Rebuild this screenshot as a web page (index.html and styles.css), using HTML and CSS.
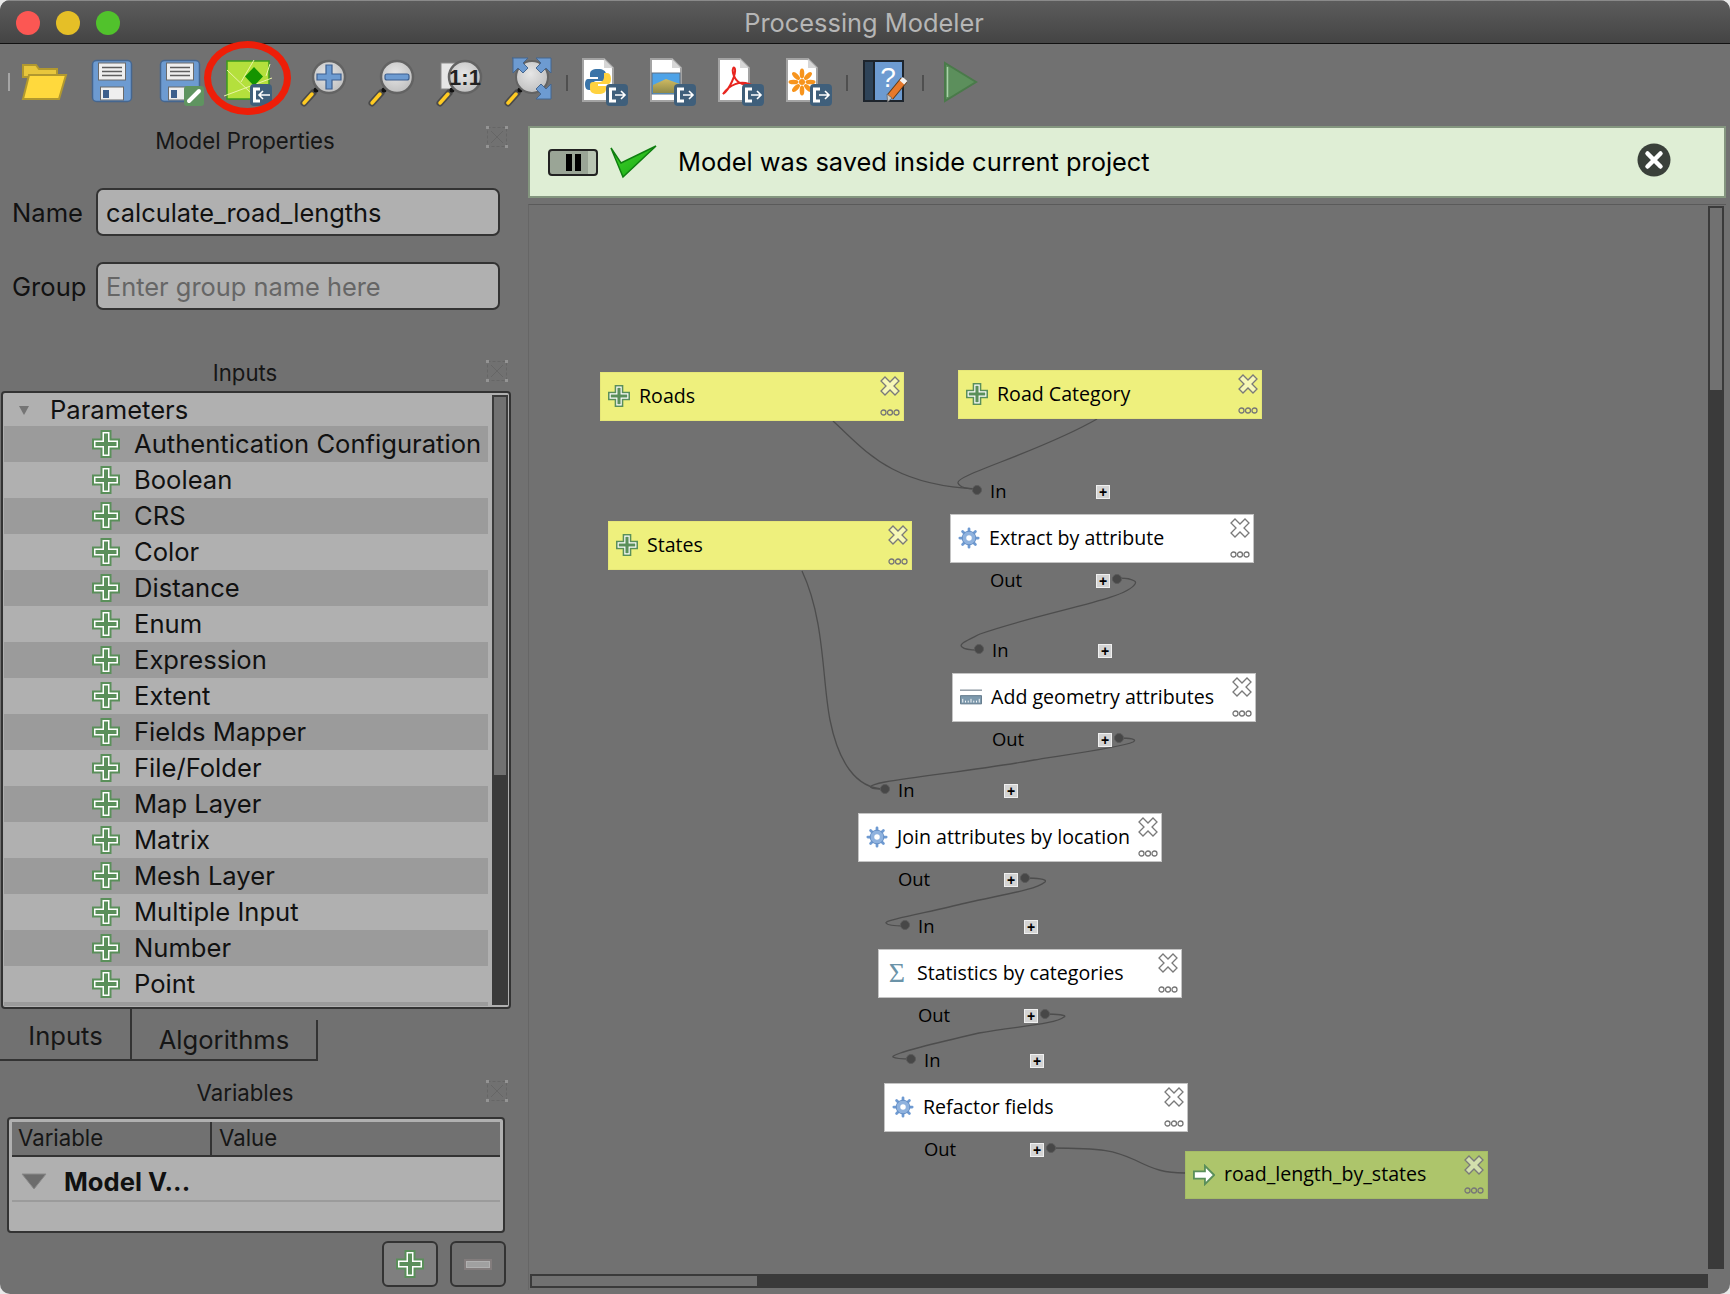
FILE: index.html
```html
<!DOCTYPE html>
<html lang="en">
<head>
  <meta charset="UTF-8">
  <title>Processing Modeler</title>
  <link rel="stylesheet" href="styles.css">
</head>
<body>

  <!-- Shared icons -->
  <svg class="sprite" xmlns="http://www.w3.org/2000/svg">
    <defs>
      <radialGradient id="lens" cx="45%" cy="40%" r="65%">
        <stop offset="0" stop-color="#e6e6e6"/>
        <stop offset="1" stop-color="#bdbdbd"/>
      </radialGradient>
      <linearGradient id="hill" x1="0" y1="0" x2="0" y2="1">
        <stop offset="0" stop-color="#d0bb62"/>
        <stop offset="1" stop-color="#8f8a4a"/>
      </linearGradient>
      <linearGradient id="tick" x1="0" y1="0" x2="1" y2="1">
        <stop offset="0" stop-color="#46d62c"/>
        <stop offset="1" stop-color="#12a512"/>
      </linearGradient>
    </defs>

    <symbol id="i-plus" viewBox="0 0 28 28">
      <path fill="#5a8f5a" d="M8.5 0h11v8.500h8.500v11h-8.500v8.500h-11v-8.500h-8.500v-11h8.500z"/>
      <path fill="#fff" d="M10.500 2h7v8.500h8.500v7h-8.500v8.500h-7v-8.500h-8.500v-7h8.500z"/>
      <path fill="#5a8f5a" d="M12 3.500h4v8.500h8.500v4h-8.500v8.500h-4v-8.500h-8.500v-4h8.500z"/>
    </symbol>

    <symbol id="i-gear" viewBox="0 0 24 24">
      <g stroke="#6e9ad2" stroke-width="3" stroke-linecap="round">
        <path d="M12 2v20M2 12h20M5 5l14 14M19 5L5 19"/>
      </g>
      <circle cx="12" cy="12" r="7.500" fill="#8fb2de" stroke="#5f8ac2"/>
      <circle cx="12" cy="12" r="3" fill="#fff"/>
    </symbol>

    <symbol id="i-geom" viewBox="0 0 24 16">
      <path fill="#fff" d="M0 0h24v6H0z"/>
      <path fill="#4e5f6e" d="M0 0h24v1H0z"/>
      <path fill="#7d99ad" stroke="#5d7587" d="M.5 6.500h23v9H.5z"/>
      <path stroke="#fff" d="M3 14v-4M6 14v-2M9 14v-2M12 14v-4M15 14v-2M18 14v-2M21 14v-4"/>
    </symbol>

    <symbol id="i-out" viewBox="0 0 24 24">
      <path fill="#fff" stroke="#5a8f5a" stroke-width="2" d="M1 8h12V2l10 10-10 10v-6H1z"/>
    </symbol>

    <symbol id="i-close" viewBox="0 0 20 20">
      <path fill="#fff" fill-opacity=".45" stroke="#7a7a7a" stroke-width="1.300" d="M5 1l5 5 5-5 4 4-5 5 5 5-4 4-5-5-5 5-4-4 5-5-5-5z"/>
    </symbol>

    <symbol id="i-more" viewBox="0 0 20 7">
      <g fill="none" stroke="#777" stroke-width="1.300">
        <circle cx="3.500" cy="3.500" r="2.500"/>
        <circle cx="10" cy="3.500" r="2.500"/>
        <circle cx="16.500" cy="3.500" r="2.500"/>
      </g>
    </symbol>

    <symbol id="i-dock" viewBox="0 0 22 22">
      <g fill="none" stroke="#666">
        <path d="M1.500 1.500h19v19h-19z" stroke-dasharray="3 2"/>
        <path d="M5 5l12 12M17 5L5 17"/>
      </g>
      <g fill="#949494">
        <rect x="0" y="0" width="3" height="3"/><rect x="19" y="0" width="3" height="3"/>
        <rect x="0" y="19" width="3" height="3"/><rect x="19" y="19" width="3" height="3"/>
      </g>
    </symbol>

    <symbol id="i-floppy" viewBox="0 0 64 64">
      <rect x="12.500" y="10.500" width="39" height="41" rx="4" fill="#6d9bd1" stroke="#45668f" stroke-width="1.500"/>
      <rect x="18.500" y="13" width="27" height="17" fill="#efefef" stroke="#6a6a6a"/>
      <path stroke="#5e5e5e" stroke-width="1.600" d="M22 17.500h20M22 21.500h20M22 25.500h20"/>
      <rect x="20.500" y="37" width="23" height="13" fill="#efefef" stroke="#6a6a6a"/>
      <rect x="23" y="40" width="6" height="8" fill="#3d5f8c"/>
    </symbol>

    <symbol id="i-export" viewBox="0 0 22 22">
      <rect width="22" height="22" rx="4" fill="#3f5f7b"/>
      <path fill="none" stroke="#fff" stroke-width="3" d="M10 5H4.500v12H10"/>
      <path fill="none" stroke="#fff" stroke-width="1.600" d="M9 11h10M15 7l4 4-4 4"/>
    </symbol>

    <symbol id="i-import" viewBox="0 0 22 22">
      <rect width="22" height="22" rx="4" fill="#3f5f7b"/>
      <path fill="none" stroke="#fff" stroke-width="3" d="M10 5H4.500v12H10"/>
      <path fill="none" stroke="#fff" stroke-width="1.600" d="M20 11H9M13 7l-4 4 4 4"/>
    </symbol>

    <symbol id="i-doc" viewBox="0 0 64 64">
      <path fill="#fff" stroke="#a3a3a3" stroke-width="2" d="M11 9h21l9 9v33H11z"/>
      <path fill="#d6d6d6" d="M32 9l9 9h-9z"/>
    </symbol>

    <symbol id="i-handle" viewBox="0 0 64 64">
      <path stroke="#4a4a4a" stroke-width="7" stroke-linecap="round" d="M29 43L20 53"/>
      <path stroke="#ffcb22" stroke-width="3.500" stroke-linecap="round" d="M28 44L20 53"/>
      <circle cx="32" cy="40" r="2.500" fill="#111"/>
    </symbol>
  </svg>

  <div class="app">

    <header class="titlebar">
      <div class="lights">
        <span class="light light-red"></span>
        <span class="light light-yellow"></span>
        <span class="light light-green"></span>
      </div>
      <h1 class="window-title">Processing Modeler</h1>
    </header>

    <div class="toolbar">
      <span class="sep sep-first"></span>

      <!-- open -->
      <svg class="tool" viewBox="0 0 64 64">
        <path fill="#e8c63c" stroke="#b1982f" stroke-width="2" d="M11 15h13l3 4h18v8H11z"/>
        <path fill="#ffd93d" stroke="#b1982f" stroke-width="2" d="M17 25h37l-7 24H11z"/>
      </svg>
      <!-- save -->
      <svg class="tool" viewBox="0 0 64 64"><use href="#i-floppy"/></svg>
      <!-- save as -->
      <svg class="tool" viewBox="0 0 64 64">
        <use href="#i-floppy"/>
        <rect x="36" y="36" width="20" height="20" rx="3" fill="#5f9460"/>
        <path stroke="#fff" stroke-width="4" stroke-linecap="round" d="M41 51l10-10"/>
      </svg>
      <!-- save in project -->
      <svg class="tool" viewBox="0 0 64 64">
        <rect x="11" y="11" width="42" height="38" fill="#b4e03c" stroke="#3b9a1d" stroke-width="1.500"/>
        <path fill="none" stroke="#eaf3a8" stroke-width="1" d="M11 20l25 24M8 46l48-18M38 10l-13 22M54 14l-4 12"/>
        <path fill="#149400" d="M38 17l9 9.500-9 9.500-9-9.500z"/>
        <use href="#i-import" x="34" y="34" width="22" height="22"/>
      </svg>
      <!-- zoom in -->
      <svg class="tool" viewBox="0 0 64 64">
        <use href="#i-handle"/>
        <circle cx="45" cy="27" r="16" fill="url(#lens)" stroke="#636363" stroke-width="2.500"/>
        <path fill="#6d9bd1" stroke="#3c5f8f" stroke-width="1.200" d="M42 15h6v9h9v6h-9v9h-6v-9h-9v-6h9z"/>
      </svg>
      <!-- zoom out -->
      <svg class="tool" viewBox="0 0 64 64">
        <use href="#i-handle"/>
        <circle cx="45" cy="27" r="16" fill="url(#lens)" stroke="#636363" stroke-width="2.500"/>
        <rect x="33" y="24" width="24" height="6" rx="2" fill="#6d9bd1" stroke="#3c5f8f" stroke-width="1.200"/>
      </svg>
      <!-- zoom actual -->
      <svg class="tool" viewBox="0 0 64 64">
        <rect x="21" y="13" width="24" height="26" fill="#e6e6e6" stroke="#8a8a8a"/>
        <use href="#i-handle"/>
        <circle cx="45" cy="27" r="16" fill="url(#lens)" stroke="#636363" stroke-width="2.500"/>
        <text class="ratio-text" x="45" y="35" text-anchor="middle">1:1</text>
      </svg>
      <!-- zoom full -->
      <svg class="tool" viewBox="0 0 64 64">
        <use href="#i-handle"/>
        <circle cx="44" cy="27" r="16" fill="url(#lens)" stroke="#636363" stroke-width="2"/>
        <g fill="#6d9bd1" stroke="#45668f">
          <path d="M24 8h16l-5 5 5 5-5 5-5-5-5 5v-15z"/>
          <path d="M63 8H48l5 5-5 5 5 5 5-5 5 5z"/>
          <path d="M63 49H48l5-5-5-5 5-5 5 5 5-5z"/>
        </g>
      </svg>

      <span class="sep sep-wide"></span>

      <!-- export as script -->
      <svg class="tool" viewBox="0 0 64 64">
        <use href="#i-doc"/>
        <path fill="#3a74a8" d="M26 19c-6 0-8 2-8 5v3h8v2H16c-2 0-3 2-3 5s1 6 4 6h3v-4c0-3 2-5 5-5h6c2 0 3-1 3-3v-4c0-3-3-5-8-5z"/>
        <path fill="#ffd23f" d="M26 44c6 0 8-2 8-5v-3h-8v-2h10c2 0 3-2 3-5s-1-6-4-6h-3v4c0 3-2 5-5 5h-6c-2 0-3 1-3 3v4c0 3 3 5 8 5z"/>
        <use href="#i-export" x="34" y="34" width="22" height="22"/>
      </svg>
      <!-- export as image -->
      <svg class="tool" viewBox="0 0 64 64">
        <use href="#i-doc"/>
        <rect x="12" y="23" width="28" height="21" fill="#4ea3e8" stroke="#5c6f82"/>
        <path fill="url(#hill)" d="M13 35l13-6 14 5v9H13z"/>
        <use href="#i-export" x="34" y="34" width="22" height="22"/>
      </svg>
      <!-- export as pdf -->
      <svg class="tool" viewBox="0 0 64 64">
        <use href="#i-doc"/>
        <path fill="none" stroke="#e8251f" stroke-width="2" d="M15 44c7-5 13-20 12-25-1-3-3-1-2 4 2 8 8 13 16 11-9-3-19 0-26 10z"/>
        <use href="#i-export" x="34" y="34" width="22" height="22"/>
      </svg>
      <!-- export as svg -->
      <svg class="tool" viewBox="0 0 64 64">
        <use href="#i-doc"/>
        <g fill="#f7941d">
          <circle cx="26" cy="32" r="3"/>
          <ellipse cx="26" cy="23.500" rx="2.300" ry="5"/>
          <ellipse cx="26" cy="40.500" rx="2.300" ry="5"/>
          <ellipse cx="17.500" cy="32" rx="5" ry="2.300"/>
          <ellipse cx="34.500" cy="32" rx="5" ry="2.300"/>
          <ellipse cx="20" cy="26" rx="2.300" ry="5" transform="rotate(-45 20 26)"/>
          <ellipse cx="32" cy="26" rx="2.300" ry="5" transform="rotate(45 32 26)"/>
          <ellipse cx="20" cy="38" rx="2.300" ry="5" transform="rotate(45 20 38)"/>
          <ellipse cx="32" cy="38" rx="2.300" ry="5" transform="rotate(-45 32 38)"/>
        </g>
        <use href="#i-export" x="34" y="34" width="22" height="22"/>
      </svg>

      <span class="sep"></span>

      <!-- edit help -->
      <svg class="tool" viewBox="0 0 64 64">
        <rect x="11" y="10" width="41" height="42" fill="#1d242c"/>
        <rect x="13" y="12" width="8" height="38" fill="#2e4358"/>
        <rect x="23" y="12" width="27" height="38" fill="#6d9bd1"/>
        <text class="help-text" x="36" y="37" text-anchor="middle">?</text>
        <path stroke="#5a3a1a" stroke-width="8" d="M38 47l14-17"/>
        <path stroke="#e8792b" stroke-width="6" d="M38 47l14-17"/>
        <path stroke="#f2f2f2" stroke-width="6" d="M50 32.500l3-3.500"/>
        <path fill="#c9c9c9" stroke="#666" stroke-width=".8" d="M35 44l5 4-4.500 4z"/>
      </svg>

      <span class="sep"></span>

      <!-- run -->
      <svg class="tool" viewBox="0 0 64 64">
        <path fill="#5c8f5c" stroke="#4a7a4a" stroke-width="2" d="M17 13l31 19-31 19z"/>
        <path stroke="#a9d2a9" stroke-width="1.500" d="M19.500 17v30"/>
      </svg>

      <span class="highlight-ring"></span>
    </div>

    <div class="main">

      <aside class="side">
        <div class="dock-title">
          Model Properties
          <svg class="dock-icon"><use href="#i-dock"/></svg>
        </div>

        <div class="props">
          <label class="prop-label" for="modelName">Name</label>
          <input class="prop-input" id="modelName" value="calculate_road_lengths">
          <label class="prop-label" for="modelGroup">Group</label>
          <input class="prop-input" id="modelGroup" placeholder="Enter group name here">
        </div>

        <div class="dock-title dock-inputs">
          Inputs
          <svg class="dock-icon"><use href="#i-dock"/></svg>
        </div>

        <div class="tree">
          <div class="tree-list">
            <div class="tree-head"><span class="twisty"></span>Parameters</div>
            <div class="tree-row"><svg class="plus-icon"><use href="#i-plus"/></svg>Authentication Configuration</div>
            <div class="tree-row"><svg class="plus-icon"><use href="#i-plus"/></svg>Boolean</div>
            <div class="tree-row"><svg class="plus-icon"><use href="#i-plus"/></svg>CRS</div>
            <div class="tree-row"><svg class="plus-icon"><use href="#i-plus"/></svg>Color</div>
            <div class="tree-row"><svg class="plus-icon"><use href="#i-plus"/></svg>Distance</div>
            <div class="tree-row"><svg class="plus-icon"><use href="#i-plus"/></svg>Enum</div>
            <div class="tree-row"><svg class="plus-icon"><use href="#i-plus"/></svg>Expression</div>
            <div class="tree-row"><svg class="plus-icon"><use href="#i-plus"/></svg>Extent</div>
            <div class="tree-row"><svg class="plus-icon"><use href="#i-plus"/></svg>Fields Mapper</div>
            <div class="tree-row"><svg class="plus-icon"><use href="#i-plus"/></svg>File/Folder</div>
            <div class="tree-row"><svg class="plus-icon"><use href="#i-plus"/></svg>Map Layer</div>
            <div class="tree-row"><svg class="plus-icon"><use href="#i-plus"/></svg>Matrix</div>
            <div class="tree-row"><svg class="plus-icon"><use href="#i-plus"/></svg>Mesh Layer</div>
            <div class="tree-row"><svg class="plus-icon"><use href="#i-plus"/></svg>Multiple Input</div>
            <div class="tree-row"><svg class="plus-icon"><use href="#i-plus"/></svg>Number</div>
            <div class="tree-row"><svg class="plus-icon"><use href="#i-plus"/></svg>Point</div>
            <div class="tree-row tree-row-cut"></div>
          </div>
          <div class="tree-scroll"></div>
        </div>

        <div class="tabs">
          <div class="tab tab-active">Inputs</div>
          <div class="tab">Algorithms</div>
        </div>

        <div class="dock-title dock-vars">
          Variables
          <svg class="dock-icon"><use href="#i-dock"/></svg>
        </div>

        <div class="vars">
          <div class="vars-head">
            <div class="vars-col vars-col-name">Variable</div>
            <div class="vars-col">Value</div>
          </div>
          <div class="vars-group">
            <svg class="vars-twisty" viewBox="0 0 26 17"><path fill="#6c6c6c" stroke="#8a8a8a" d="M1 1h24L13 16z"/></svg>
            Model V...
          </div>
        </div>

        <div class="vars-actions">
          <button class="icon-btn"><svg class="plus-icon"><use href="#i-plus"/></svg></button>
          <button class="icon-btn"><span class="minus-off"></span></button>
        </div>
      </aside>

      <section class="work">
        <div class="message">
          <span class="pause-btn"><i></i><i></i></span>
          <svg class="check-icon" viewBox="0 0 48 34">
            <path fill="url(#tick)" stroke="#0f7f10" stroke-width="1.500" d="M1 3l10 15L46 1 13 32z"/>
          </svg>
          <span class="message-text">Model was saved inside current project</span>
          <svg class="message-close" viewBox="0 0 34 34">
            <circle cx="17" cy="17" r="16.500" fill="#3a403a"/>
            <path stroke="#fff" stroke-width="4.500" stroke-linecap="round" d="M10.500 10.500l13 13M23.500 10.500l-13 13"/>
          </svg>
        </div>

        <div class="view">
          <div class="canvas">
            <!-- wires use page coordinates -->
            <svg class="wires" viewBox="529 205 1179 1069">
              <g fill="none" stroke="#4d4d4d" stroke-width="1.300">
                <path d="M833 421C865 450 890 485 977 489"/>
                <path d="M1097 419C1040 452 955 475 958 483C960 488 970 489 977 489"/>
                <path d="M802 571C825 620 822 680 830 720C838 760 855 789 885 789"/>
                <path d="M1117 578C1128 578 1138 580 1135 584C1125 600 1050 610 980 634C968 640 958 644 962 647C965 650 972 650 978 650"/>
                <path d="M1118 738C1130 738 1138 739 1133 742C1120 748 1050 757 1034 760C990 768 930 775 885 782C880 783 866 786 872 788C876 789 880 789 885 789"/>
                <path d="M1025 878C1036 878 1048 879 1045 882C1036 890 1000 895 966 903C930 912 884 920 886 923C888 926 896 926 904 926"/>
                <path d="M1045 1014C1056 1014 1068 1015 1064 1017C1056 1024 1020 1026 979 1033C940 1042 890 1054 893 1057C896 1059 902 1059 911 1059"/>
                <path d="M1050 1148C1105 1148 1115 1151 1135 1160C1155 1170 1165 1173 1185 1173"/>
              </g>
            </svg>

            <div class="node node-input pos-roads">
              <svg class="node-icon"><use href="#i-plus"/></svg>Roads
              <svg class="node-close"><use href="#i-close"/></svg>
              <svg class="node-more"><use href="#i-more"/></svg>
            </div>
            <div class="node node-input pos-category">
              <svg class="node-icon"><use href="#i-plus"/></svg>Road Category
              <svg class="node-close"><use href="#i-close"/></svg>
              <svg class="node-more"><use href="#i-more"/></svg>
            </div>
            <div class="node node-input pos-states">
              <svg class="node-icon"><use href="#i-plus"/></svg>States
              <svg class="node-close"><use href="#i-close"/></svg>
              <svg class="node-more"><use href="#i-more"/></svg>
            </div>

            <div class="alg pos-extract">
              <div class="port port-in"><span class="dot"></span><span class="port-name">In</span><span class="port-add">+</span></div>
              <div class="node">
                <svg class="node-icon"><use href="#i-gear"/></svg>Extract by attribute
                <svg class="node-close"><use href="#i-close"/></svg>
                <svg class="node-more"><use href="#i-more"/></svg>
              </div>
              <div class="port port-out"><span></span><span class="port-name">Out</span><span class="port-add">+</span><span class="dot"></span></div>
            </div>

            <div class="alg pos-geometry">
              <div class="port port-in"><span class="dot"></span><span class="port-name">In</span><span class="port-add">+</span></div>
              <div class="node">
                <svg class="node-icon"><use href="#i-geom"/></svg>Add geometry attributes
                <svg class="node-close"><use href="#i-close"/></svg>
                <svg class="node-more"><use href="#i-more"/></svg>
              </div>
              <div class="port port-out"><span></span><span class="port-name">Out</span><span class="port-add">+</span><span class="dot"></span></div>
            </div>

            <div class="alg pos-join">
              <div class="port port-in"><span class="dot"></span><span class="port-name">In</span><span class="port-add">+</span></div>
              <div class="node">
                <svg class="node-icon"><use href="#i-gear"/></svg>Join attributes by location
                <svg class="node-close"><use href="#i-close"/></svg>
                <svg class="node-more"><use href="#i-more"/></svg>
              </div>
              <div class="port port-out"><span></span><span class="port-name">Out</span><span class="port-add">+</span><span class="dot"></span></div>
            </div>

            <div class="alg pos-stats">
              <div class="port port-in"><span class="dot"></span><span class="port-name">In</span><span class="port-add">+</span></div>
              <div class="node">
                <span class="node-icon sigma">Σ</span>Statistics by categories
                <svg class="node-close"><use href="#i-close"/></svg>
                <svg class="node-more"><use href="#i-more"/></svg>
              </div>
              <div class="port port-out"><span></span><span class="port-name">Out</span><span class="port-add">+</span><span class="dot"></span></div>
            </div>

            <div class="alg pos-refactor">
              <div class="port port-in"><span class="dot"></span><span class="port-name">In</span><span class="port-add">+</span></div>
              <div class="node">
                <svg class="node-icon"><use href="#i-gear"/></svg>Refactor fields
                <svg class="node-close"><use href="#i-close"/></svg>
                <svg class="node-more"><use href="#i-more"/></svg>
              </div>
              <div class="port port-out"><span></span><span class="port-name">Out</span><span class="port-add">+</span><span class="dot"></span></div>
            </div>

            <div class="node node-output pos-output">
              <svg class="node-icon"><use href="#i-out"/></svg>road_length_by_states
              <svg class="node-close"><use href="#i-close"/></svg>
              <svg class="node-more"><use href="#i-more"/></svg>
            </div>
          </div>

          <div class="vbar"><div class="vbar-thumb"></div></div>
          <div class="hbar"><div class="hbar-thumb"></div></div>
        </div>
      </section>
    </div>
  </div>

</body>
</html>
```

FILE: styles.css
```css
html, body {
  margin: 0;
  padding: 0;
  height: 100%;
  background: #e9e9e9;
  overflow: hidden;
}

body {
  font-family: "Inter", "Liberation Sans", sans-serif;
  color: #111;
}

.sprite {
  position: absolute;
  width: 0;
  height: 0;
}

.app {
  width: 1730px;
  height: 1294px;
  background: #717171;
  border-radius: 10px;
  overflow: hidden;
  display: flex;
  flex-direction: column;
}

/* Title bar */
.titlebar {
  height: 42px;
  flex: none;
  position: relative;
  display: flex;
  justify-content: center;
  align-items: center;
  background: linear-gradient(#5c5c5c, #444);
  border-top: 1px solid #8a8a8a;
  border-bottom: 1px solid #111;
}

.lights {
  position: absolute;
  left: 16px;
  top: 10px;
  display: flex;
  gap: 16px;
}

.light {
  width: 24px;
  height: 24px;
  border-radius: 50%;
}

.light-red { background: #fc5753; }
.light-yellow { background: #e5bf27; }
.light-green { background: #51c22c; }

.window-title {
  margin: 0;
  padding-right: 2px;
  font-size: 25.4px;
  font-weight: 400;
  color: #b6b6b6;
}

/* Toolbar */
.toolbar {
  height: 74px;
  flex: none;
  position: relative;
  display: flex;
  align-items: flex-start;
  gap: 4px;
  padding: 6px 0 0 8px;
  box-sizing: border-box;
}

.tool {
  width: 64px;
  height: 64px;
  flex: none;
}

.sep {
  width: 2px;
  height: 16px;
  margin: 25px 0 0 2px;
  background: #4f4f4f;
  flex: none;
}

.sep-first {
  height: 18px;
  margin: 23px -2px 0 0;
  background: #a5a5a5;
}

.sep-wide {
  margin-left: 10px;
}

.highlight-ring {
  position: absolute;
  left: 204px;
  top: -3px;
  width: 87px;
  height: 74px;
  box-sizing: border-box;
  border: 7px solid #ee1e08;
  border-radius: 50%;
}

.ratio-text {
  font-family: "Liberation Sans", sans-serif;
  font-size: 22px;
  font-weight: 700;
  fill: #222;
}

.help-text {
  font-family: "Liberation Sans", sans-serif;
  font-size: 28px;
  fill: #fff;
}

/* Layout */
.main {
  flex: 1;
  display: flex;
  min-height: 0;
}

.side {
  width: 528px;
  flex: none;
}

.work {
  flex: 1;
  min-width: 0;
  display: flex;
  flex-direction: column;
  padding: 8px 4px 4px 0;
}

/* Dock titles */
.dock-title {
  box-sizing: content-box;
  position: relative;
  width: 490px;
  padding-right: 20px;
  height: 44px;
  display: flex;
  justify-content: center;
  align-items: center;
  font-size: 22.2px;
  color: #161616;
}

.dock-icon {
  position: absolute;
  right: 2px;
  top: 8px;
  width: 22px;
  height: 22px;
}

.dock-inputs {
  height: 36px;
  padding-bottom: 1px;
  margin-top: 44px;
}

.dock-inputs .dock-icon {
  top: 6px;
}

.dock-vars {
  height: 40px;
  margin-top: 11px;
  margin-bottom: 5px;
}

/* Name and group */
.props {
  display: grid;
  grid-template-columns: 84px 404px;
  column-gap: 0;
  row-gap: 26px;
  margin: 26px 0 0 12px;
  align-items: center;
}

.prop-label {
  font-size: 25.6px;
}

.prop-input {
  box-sizing: border-box;
  width: 404px;
  height: 48px;
  padding: 0 8px;
  font-family: inherit;
  font-size: 25.4px;
  color: #111;
  background: #b0b0b0;
  border: 2px solid #333;
  border-radius: 7px;
  outline: none;
}

.prop-input::placeholder {
  color: #666;
  opacity: 1;
}

/* Parameter tree */
.tree {
  box-sizing: border-box;
  width: 510px;
  height: 618px;
  margin-left: 1px;
  display: flex;
  background: #b0b0b0;
  border: 2px solid #333;
  border-radius: 4px;
  overflow: hidden;
}

.tree-list {
  width: 484px;
  margin-left: 1px;
  flex: none;
  font-size: 25.6px;
}

.tree-head {
  height: 33px;
  display: flex;
  align-items: center;
  padding-left: 46px;
  position: relative;
}

.twisty {
  position: absolute;
  left: 15px;
  top: 13px;
  border-left: 5.5px solid transparent;
  border-right: 5.5px solid transparent;
  border-top: 9px solid #757575;
}

.tree-row {
  box-sizing: border-box;
  height: 36px;
  display: flex;
  align-items: center;
  padding: 0 0 2px 88px;
  white-space: nowrap;
}

.tree-row:nth-child(even) {
  background: #9b9b9b;
}

.tree-row .plus-icon {
  margin-top: 2px;
}

.tree-row-cut {
  height: 4px;
  padding: 0;
}

.plus-icon {
  width: 28px;
  height: 28px;
  flex: none;
  margin-right: 14px;
}

.tree-scroll {
  box-sizing: border-box;
  width: 16px;
  height: 610px;
  margin: 2px 0 0 4px;
  flex: none;
  border: 2px solid #3a3a3a;
  border-bottom-width: 230px;
  background: #717171;
}

/* Tabs */
.tabs {
  display: flex;
  align-items: flex-end;
  height: 52px;
}

.tab {
  box-sizing: border-box;
  border-right: 2px solid #333;
  border-bottom: 2px solid #333;
  display: flex;
  justify-content: center;
  align-items: center;
  font-size: 25.6px;
  color: #161616;
  width: 186px;
  height: 41px;
}

.tab-active {
  width: 132px;
  height: 52px;
  padding: 3px 0 0 1px;
}

/* Variables */
.vars {
  box-sizing: border-box;
  width: 498px;
  height: 116px;
  margin-left: 7px;
  padding: 3px;
  background: #b0b0b0;
  border: 2px solid #333;
  border-radius: 4px;
}

.vars-head {
  display: flex;
  height: 35px;
  margin: 0 0 0 0;
  background: #717171;
  border-bottom: 2px solid #333;
  box-sizing: border-box;
  font-size: 22.2px;
  color: #161616;
}

.vars-col {
  display: flex;
  align-items: center;
  padding: 0 0 2px 7px;
}

.vars-col-name {
  width: 192px;
  border-right: 2px solid #333;
  padding-left: 6px;
}

.vars-group {
  box-sizing: border-box;
  height: 45px;
  display: flex;
  align-items: center;
  padding: 5px 0 0 9px;
  font-size: 25.6px;
  font-weight: 700;
  border-bottom: 2px solid #9b9b9b;
}

.vars-twisty {
  width: 26px;
  height: 17px;
  margin-right: 17px;
}

.vars-actions {
  display: flex;
  justify-content: flex-end;
  gap: 12px;
  width: 506px;
  margin-top: 8px;
}

.icon-btn {
  box-sizing: border-box;
  width: 56px;
  height: 46px;
  padding: 0;
  display: flex;
  justify-content: center;
  align-items: center;
  background: #7f7f7f;
  border: 2px solid #333;
  border-radius: 6px;
}

.icon-btn .plus-icon {
  margin: 0;
}

.icon-btn + .icon-btn {
  background: #717171;
}

.minus-off {
  box-sizing: border-box;
  width: 28px;
  height: 11px;
  background: #a0a0a0;
  border: 2px solid #837d7d;
  box-shadow: inset 0 0 0 1px #b0b0b0;
}

/* Message bar */
.message {
  box-sizing: border-box;
  height: 72px;
  flex: none;
  display: flex;
  align-items: center;
  padding-left: 18px;
  background: #dfeed5;
  border: 2px solid #84967f;
  position: relative;
}

.pause-btn {
  box-sizing: border-box;
  width: 50px;
  height: 27px;
  display: flex;
  justify-content: center;
  gap: 3px;
  padding: 3px 0;
  border: 2px solid #222;
  border-radius: 4px;
  background: linear-gradient(90deg, #9aa596 82%, #b9c5b3 82%);
}

.pause-btn i {
  width: 6px;
  background: #000;
}

.check-icon {
  width: 48px;
  height: 34px;
  margin-left: 12px;
  flex: none;
}

.message-text {
  margin-left: 20px;
  margin-bottom: 2px;
  font-size: 25.4px;
  color: #000;
}

.message-close {
  position: absolute;
  left: 1107px;
  top: 15px;
  width: 34px;
  height: 34px;
}

/* Scene view */
.view {
  flex: 1;
  min-height: 0;
  margin-top: 6px;
  display: grid;
  grid-template-columns: 1179px 17px;
  grid-template-rows: 1069px 16px;
  border-top: 1px solid #5a5a5a;
  border-left: 1px solid #666;
}

.canvas {
  position: relative;
  overflow: hidden;
}

.wires {
  position: absolute;
  left: 0;
  top: 0;
  width: 1179px;
  height: 1069px;
}

.vbar {
  box-sizing: border-box;
  width: 16px;
  height: 1063px;
  margin-top: 1px;
  background: #3a3a3a;
}

.vbar-thumb {
  box-sizing: border-box;
  height: 184px;
  background: #717171;
  border: 2px solid #3a3a3a;
  border-bottom: 0;
}

.hbar {
  box-sizing: border-box;
  grid-column: 1;
  height: 14px;
  margin-left: 1px;
  background: #3a3a3a;
}

.hbar-thumb {
  box-sizing: border-box;
  width: 227px;
  height: 14px;
  background: #717171;
  border: 2px solid #3a3a3a;
  border-right: 0;
}

/* Model nodes */
.node {
  box-sizing: border-box;
  position: relative;
  width: 304px;
  height: 49px;
  display: flex;
  align-items: center;
  padding: 0 0 3px 7px;
  font-family: "Open Sans", sans-serif;
  font-size: 19.6px;
  color: #000;
  background: #fff;
  border: 1px solid #c4c4c4;
  white-space: nowrap;
}

.node-input,
.node-output,
.alg {
  position: absolute;
}

.node-input {
  background: #eef07d;
  border-color: #e6e778;
}

.node-output {
  width: 303px;
  height: 48px;
  background: #adc56b;
  border-color: #a5bc66;
}

.node-icon {
  width: 22px;
  height: 22px;
  margin: 2px 9px 0 0;
  flex: none;
}

.sigma {
  display: flex;
  justify-content: center;
  align-items: center;
  font-family: "Liberation Serif", serif;
  font-size: 28px;
  color: #6b93a8;
}

.node-close {
  position: absolute;
  right: 3px;
  top: 3px;
  width: 20px;
  height: 20px;
}

.node-more {
  position: absolute;
  right: 3px;
  bottom: 4px;
  width: 20px;
  height: 7px;
}

.port {
  display: grid;
  grid-template-columns: 40px 106px 14px 10px;
  height: 26px;
  align-items: center;
  font-family: "Open Sans", sans-serif;
  font-size: 18.4px;
  color: #000;
}

.port-in {
  margin-bottom: 10px;
}

.port-in .port-name {
  margin-top: -1px;
}

.port-out {
  margin-top: 3px;
}

.port-out .port-add {
  margin-top: 4px;
}

.port-add {
  box-sizing: border-box;
  width: 14px;
  height: 14px;
  display: flex;
  justify-content: center;
  align-items: center;
  font-family: "Liberation Sans", sans-serif;
  font-size: 14px;
  font-weight: 700;
  line-height: 1;
  margin-top: 2px;
  color: #000;
  background: #d4d4d4;
  border: 1px solid #f0f0f0;
}

.dot {
  width: 10px;
  height: 10px;
  border-radius: 50%;
  background: #474747;
  border: 1px solid #5a5a5a;
  box-sizing: border-box;
  margin-top: -3px;
}

.port-in .dot {
  justify-self: end;
  margin-right: 8px;
}

.port-out .dot {
  margin-left: 2px;
  margin-top: -1px;
}

/* Node places on the canvas */
.pos-roads { left: 71px; top: 167px; }
.pos-category { left: 429px; top: 165px; }
.pos-states { left: 79px; top: 316px; }
.pos-extract { left: 421px; top: 273px; }
.pos-geometry { left: 423px; top: 432px; }
.pos-join { left: 329px; top: 572px; }
.pos-stats { left: 349px; top: 708px; }
.pos-refactor { left: 355px; top: 842px; }
.pos-output { left: 656px; top: 946px; }
```
